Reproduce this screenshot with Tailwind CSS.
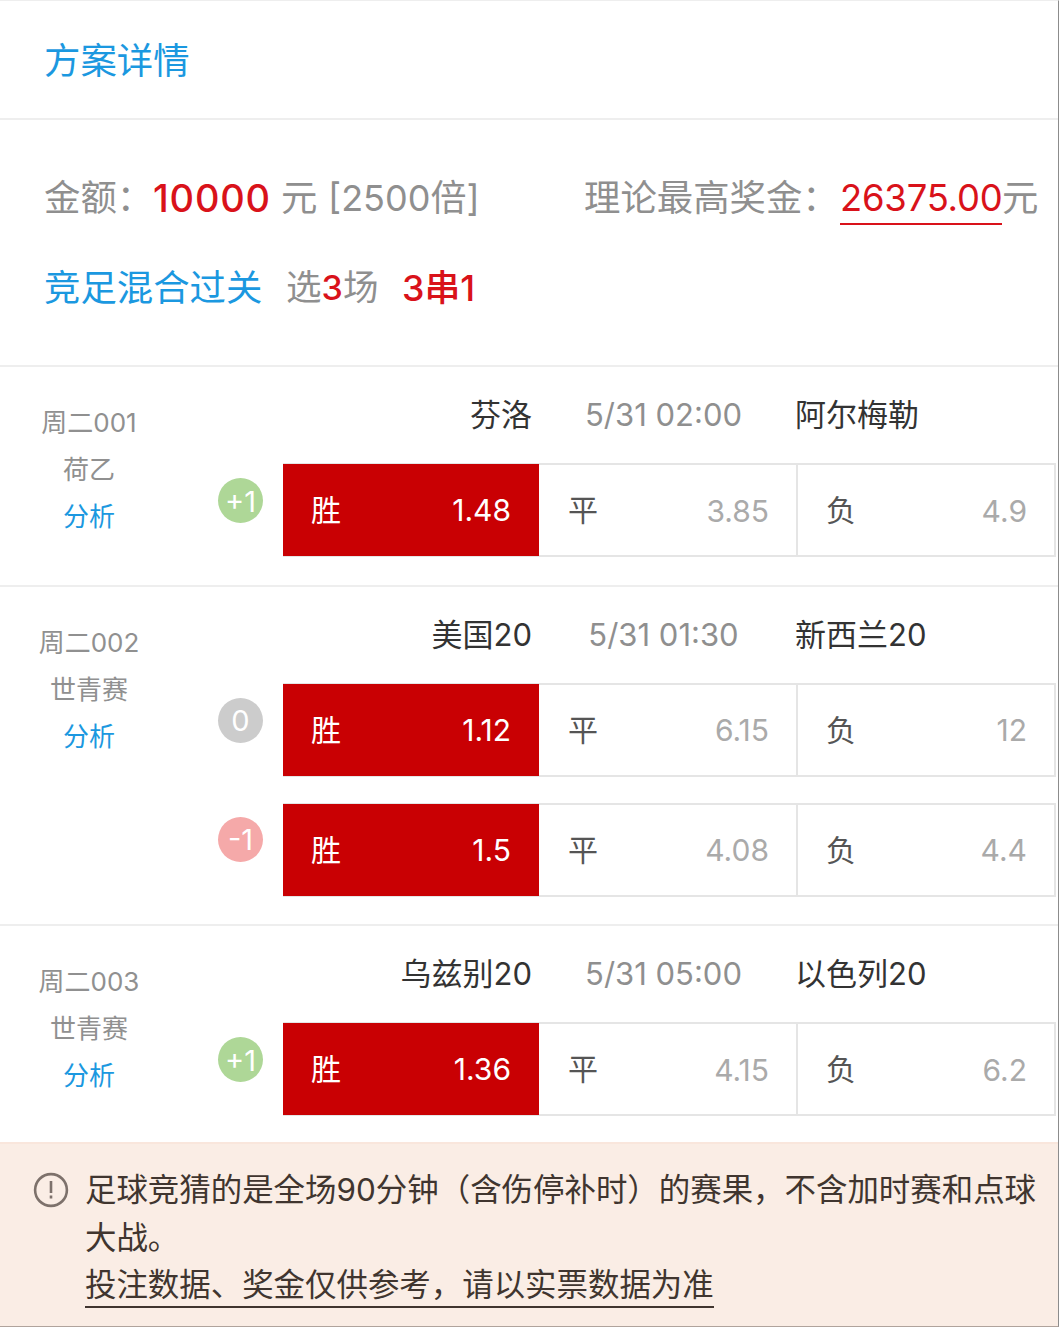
<!DOCTYPE html>
<html lang="zh-CN">

<head>
    <meta charset="UTF-8">
    <meta name="viewport" content="width=device-width, initial-scale=1.0">
    <title>方案详情</title>
    <script src="https://cdn.jsdelivr.net/npm/@tailwindcss/browser@4"></script>
</head>

<body class="bg-white">
    <main class="flex flex-col h-[1327px] overflow-hidden border-t border-t-[#eeeeee] border-r border-r-[#8c8c8c] border-b border-b-[#b0a39c] font-[Inter,'Noto_Sans_CJK_SC',sans-serif] text-[#333333] whitespace-nowrap">
        <h1 class="h-[119px] shrink-0 pl-11 border-b-2 border-[#eeeeee] text-[36.4px] leading-[120px] text-[#1b98e0]">方案详情</h1>

        <section class="h-[247px] shrink-0 pt-[54px] pl-11 border-b-2 border-[#eeeeee] text-[36.4px] leading-[48px] text-[#8f8f8f]">
            <div class="flex">
                <p class="w-[540px] flex">
                    <span class="w-[109px]">金额：</span>
                    <span class="w-[128px] text-[38px] font-[450] tracking-[0.8px] text-[#d9121a]">10000</span>
                    <span class="w-[47px]">元</span>
                    <span class="text-[36px]">[2500倍]</span>
                </p>
                <p class="flex">
                    <span class="w-[256px]">理论最高奖金：</span>
                    <span class="w-[162px] h-[51px] border-b-2 border-[#d9121a] tracking-[-0.2px] text-[#d9121a]">26375.00</span>
                    <span>元</span>
                </p>
            </div>
            <p class="flex mt-[39px]">
                <span class="w-[242px] text-[#1b98e0]">竞足混合过关</span>
                <span class="w-[116px] text-[35.6px]">选<span class="font-medium text-[34px] text-[#d9121a]">3</span>场</span>
                <span class="font-[450] text-[35.8px] text-[#d9121a]">3串1</span>
            </p>
        </section>

        <section class="h-[220px] shrink-0 flex border-b-2 border-[#eeeeee]">
            <div class="w-[178px] pt-8 text-center text-[26px] leading-[47px] text-[#909090]">
                <p>周二001</p>
                <p>荷乙</p>
                <a class="text-[#1b98e0]">分析</a>
            </div>
            <div class="w-[878px]">
                <div class="flex h-24 pl-[105px] text-[31px] leading-[96px]">
                    <span class="w-[249px] text-right">芬洛</span>
                    <span class="w-[263px] text-center text-[#8f8f8f]">5/31 02:00</span>
                    <span>阿尔梅勒</span>
                </div>
                <div class="flex">
                    <span class="w-[45px] h-[45px] mt-[15px] ml-10 mr-5 rounded-full bg-[#aed797] text-center text-[29px] leading-[47px] text-white">+1</span>
                    <div class="flex h-[94px] text-[30px] leading-[92px]">
                        <div class="w-[256px] flex justify-between px-7 border-y border-[#e5e5e5] bg-[#c90003] bg-clip-padding text-white"><span>胜</span><span class="leading-[93px]">1.48</span></div>
                        <div class="w-[259px] flex justify-between pl-[29px] pr-[27px] border-y-2 border-r-2 border-[#e5e5e5] text-[#555555] leading-[90px]"><span>平</span><span class="text-[#aaaaaa] leading-[92px]">3.85</span></div>
                        <div class="w-[258px] flex justify-between pl-7 pr-[27px] border-y-2 border-r-2 border-[#e5e5e5] text-[#555555] leading-[90px]"><span>负</span><span class="text-[#aaaaaa] leading-[92px]">4.9</span></div>
                    </div>
                </div>
            </div>
        </section>

        <section class="h-[339px] shrink-0 flex border-b-2 border-[#eeeeee]">
            <div class="w-[178px] pt-8 text-center text-[26px] leading-[47px] text-[#909090]">
                <p>周二002</p>
                <p>世青赛</p>
                <a class="text-[#1b98e0]">分析</a>
            </div>
            <div class="w-[878px]">
                <div class="flex h-24 pl-[105px] text-[31px] leading-[96px]">
                    <span class="w-[249px] text-right">美国20</span>
                    <span class="w-[263px] text-center text-[#8f8f8f]">5/31 01:30</span>
                    <span>新西兰20</span>
                </div>
                <div class="flex">
                    <span class="w-[45px] h-[45px] mt-[15px] ml-10 mr-5 rounded-full bg-[#cccccc] text-center text-[29px] leading-[46px] text-white">0</span>
                    <div class="flex h-[94px] text-[30px] leading-[92px]">
                        <div class="w-[256px] flex justify-between px-7 border-y border-[#e5e5e5] bg-[#c90003] bg-clip-padding text-white"><span>胜</span><span>1.12</span></div>
                        <div class="w-[259px] flex justify-between pl-[29px] pr-[27px] border-y-2 border-r-2 border-[#e5e5e5] text-[#555555] leading-[90px]"><span>平</span><span class="text-[#aaaaaa]">6.15</span></div>
                        <div class="w-[258px] flex justify-between pl-7 pr-[27px] border-y-2 border-r-2 border-[#e5e5e5] text-[#555555] leading-[90px]"><span>负</span><span class="text-[#aaaaaa]">12</span></div>
                    </div>
                </div>
                <div class="flex mt-[26px]">
                    <span class="w-[45px] h-[45px] mt-[14px] ml-10 mr-5 rounded-full bg-[#f5a9a9] text-center text-[29px] leading-[46px] text-white">-1</span>
                    <div class="flex h-[94px] text-[30px] leading-[92px]">
                        <div class="w-[256px] flex justify-between px-7 border-y border-[#e5e5e5] bg-[#c90003] bg-clip-padding text-white"><span>胜</span><span>1.5</span></div>
                        <div class="w-[259px] flex justify-between pl-[29px] pr-[27px] border-y-2 border-r-2 border-[#e5e5e5] text-[#555555] leading-[90px]"><span>平</span><span class="text-[#aaaaaa]">4.08</span></div>
                        <div class="w-[258px] flex justify-between pl-7 pr-[27px] border-y-2 border-r-2 border-[#e5e5e5] text-[#555555] leading-[90px]"><span>负</span><span class="text-[#aaaaaa]">4.4</span></div>
                    </div>
                </div>
            </div>
        </section>

        <section class="h-[216px] shrink-0 flex">
            <div class="w-[178px] pt-8 text-center text-[26px] leading-[47px] text-[#909090]">
                <p>周二003</p>
                <p>世青赛</p>
                <a class="text-[#1b98e0]">分析</a>
            </div>
            <div class="w-[878px]">
                <div class="flex h-24 pl-[105px] text-[31px] leading-[96px]">
                    <span class="w-[249px] text-right">乌兹别20</span>
                    <span class="w-[263px] text-center text-[#8f8f8f]">5/31 05:00</span>
                    <span>以色列20</span>
                </div>
                <div class="flex">
                    <span class="w-[45px] h-[45px] mt-[15px] ml-10 mr-5 rounded-full bg-[#aed797] text-center text-[29px] leading-[47px] text-white">+1</span>
                    <div class="flex h-[94px] text-[30px] leading-[92px]">
                        <div class="w-[256px] flex justify-between px-7 border-y border-[#e5e5e5] bg-[#c90003] bg-clip-padding text-white"><span>胜</span><span>1.36</span></div>
                        <div class="w-[259px] flex justify-between pl-[29px] pr-[27px] border-y-2 border-r-2 border-[#e5e5e5] text-[#555555] leading-[90px]"><span>平</span><span class="text-[#aaaaaa] leading-[92px]">4.15</span></div>
                        <div class="w-[258px] flex justify-between pl-7 pr-[27px] border-y-2 border-r-2 border-[#e5e5e5] text-[#555555] leading-[90px]"><span>负</span><span class="text-[#aaaaaa] leading-[92px]">6.2</span></div>
                    </div>
                </div>
            </div>
        </section>

        <footer class="grow flex pt-[23px] pl-[33px] border-t-2 border-[#f9e6dc] bg-[#faede5] text-[31.45px] leading-[47.5px] text-[#40352f]">
            <svg class="w-9 h-9 mt-[5px] mr-4 shrink-0" viewBox="0 0 36 36" fill="none" stroke="#7d716b" stroke-width="2.6">
                <circle cx="18" cy="18" r="15.9"/>
                <path d="M18 9v12M18 23.5v3"/>
            </svg>
            <div>
                <p>足球竞猜的是全场90分钟（含伤停补时）的赛果，不含加时赛和点球</p>
                <p>大战。</p>
                <p><span class="inline-block h-[46px] border-b-2 border-[#40352f]">投注数据、奖金仅供参考，请以实票数据为准</span></p>
            </div>
        </footer>
    </main>
</body>

</html>
